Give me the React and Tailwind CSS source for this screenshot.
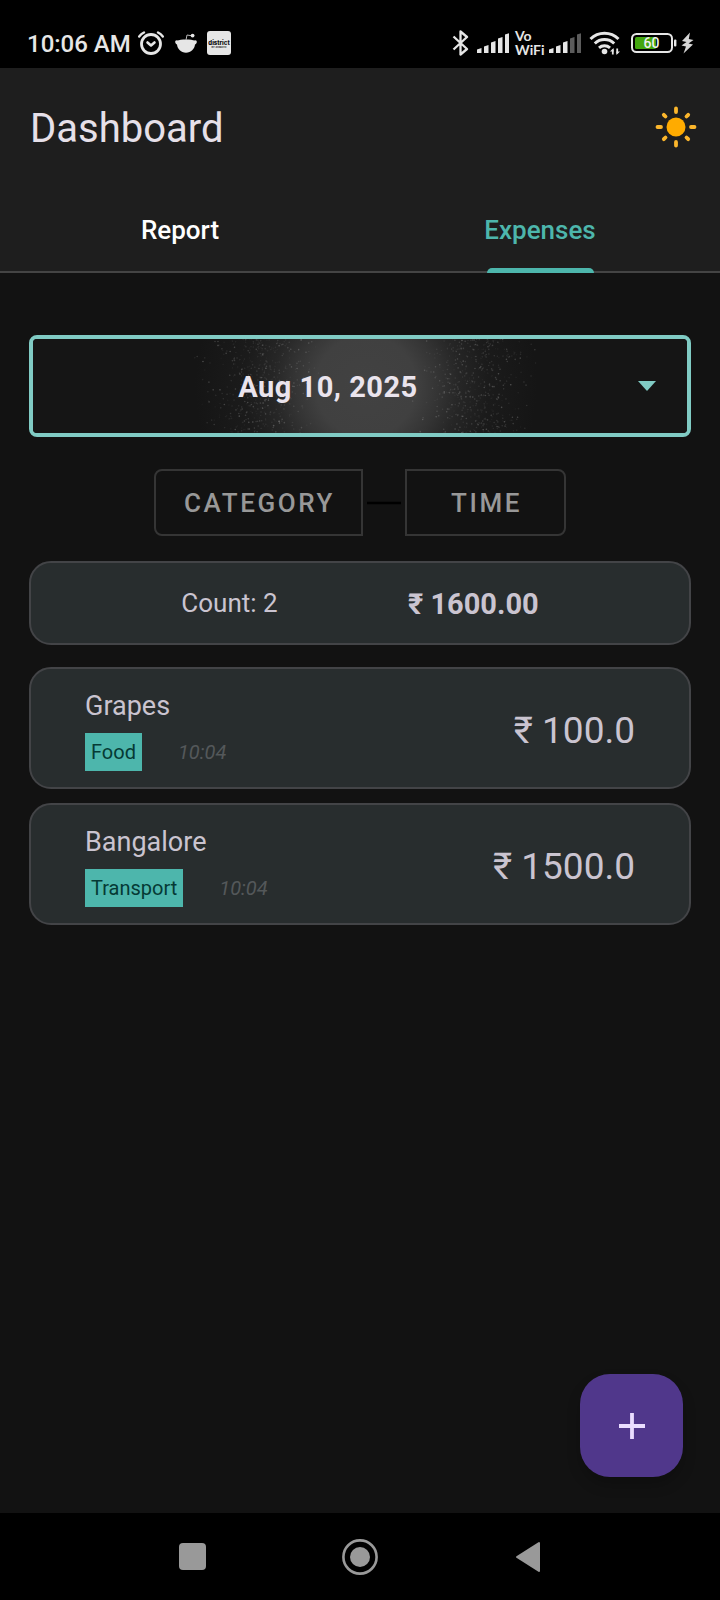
import React from "react";

const expenses = [
  { title: "Grapes", category: "Food", time: "10:04", amount: "₹ 100.0" },
  { title: "Bangalore", category: "Transport", time: "10:04", amount: "₹ 1500.0" },
];

function makeGrain() {
  let seed = 7;
  const rand = () => {
    seed = (seed * 16807) % 2147483647;
    return seed / 2147483647;
  };
  const dots = [];
  for (let i = 0; i < 1000; i++) {
    const side = rand() < 0.5 ? -1 : 1;
    const spread = 35 + ((rand() + rand() + rand()) / 3) * 145;
    dots.push({
      x: 333 + side * spread,
      y: rand() * 94,
      o: 0.03 + rand() * rand() * 0.24,
    });
  }
  return dots;
}

const grain = makeGrain();

function Glow() {
  return (
    <svg
      aria-hidden="true"
      className="absolute inset-0 h-full w-full"
      viewBox="0 0 654 94"
      preserveAspectRatio="xMidYMid slice"
    >
      <defs>
        <radialGradient id="glow" gradientUnits="userSpaceOnUse" cx="333" cy="47" r="180">
          <stop offset="0" stopColor="#424242" />
          <stop offset="0.28" stopColor="#404040" />
          <stop offset="0.4" stopColor="#343434" />
          <stop offset="0.52" stopColor="#262626" />
          <stop offset="0.68" stopColor="#1b1b1b" />
          <stop offset="0.95" stopColor="#151515" />
        </radialGradient>
      </defs>
      <rect width="654" height="94" fill="url(#glow)" />
      {grain.map((d, i) => (
        <circle key={i} cx={d.x} cy={d.y} r="0.8" fill="#fff" opacity={d.o} />
      ))}
    </svg>
  );
}

function Signal({ level }) {
  const bars = [5, 8, 12, 16, 20];
  return (
    <svg aria-hidden="true" width="32" height="20" viewBox="0 0 32 20">
      {bars.map((h, i) => (
        <path
          key={h}
          d={`M${i * 7} ${20 - h + 1.5}L${i * 7 + 4.5} ${20 - h}V20H${i * 7}Z`}
          fill={i < level ? "#e6e6e6" : "#5c5c5c"}
        />
      ))}
    </svg>
  );
}

function StatusBar() {
  return (
    <div className="flex h-[68px] items-center justify-between bg-black pr-[26px] pl-[27px] pt-[18px] text-[#e6e6e6]">
      <div className="flex items-center">
        <span className="pt-0.5 text-2xl leading-7 font-medium">10:06 AM</span>
        <svg aria-hidden="true" className="ml-1.5" width="28" height="24" viewBox="0 0 28 24" fill="none" stroke="#e6e6e6" strokeLinecap="round">
          <circle cx="14" cy="13" r="9.5" strokeWidth="2.8" />
          <path d="M2.200 5.500A14 14 0 0 1 7 1.500M25.800 5.500A14 14 0 0 0 21 1.500" strokeWidth="2.400" />
          <path d="M10.500 11.500L14 14.500L17.500 11.500" strokeWidth="2.600" strokeLinejoin="round" />
        </svg>
        <svg aria-hidden="true" className="ml-2.5" width="22" height="20" viewBox="0 0 22 20">
          <path d="M2.500 7.500C5 6 17 6 19.500 7.500C21 7 22 8 21.800 9.200C21.600 10.500 20.600 11 20 11.500C19.500 16 16 19.700 11 19.700S2.500 16 2 11.500C1.400 11 0.400 10.500 0.200 9.200C0 8 1 7 2.500 7.500Z" fill="#e6e6e6" />
          <path d="M11 7L12 2L17 2.800" fill="none" stroke="#b8b8b8" strokeWidth="1" />
          <circle cx="17.600" cy="2.600" r="1.900" fill="#e6e6e6" />
        </svg>
        <svg aria-hidden="true" className="ml-2.5" width="24" height="24" viewBox="0 0 24 24">
          <rect width="24" height="24" rx="3" fill="#e6e6e6" />
          <text x="12" y="13.500" textAnchor="middle" fontFamily="Inter, sans-serif" fontWeight="800" fontSize="6" fill="#111">district</text>
          <text x="12" y="17.200" textAnchor="middle" fontFamily="Inter, sans-serif" fontWeight="700" fontSize="2.500" fill="#222">BY ZOMATO</text>
        </svg>
      </div>
      <div className="flex items-center">
        <svg aria-hidden="true" width="17" height="26" viewBox="0 0 17 26" fill="none" stroke="#e6e6e6" strokeWidth="2.300" strokeLinejoin="round">
          <path d="M1.500 6.500L15 19L8.500 24.500V1.500L15 7L1.500 19.500" />
        </svg>
        <div className="ml-2">
          <Signal level={5} />
        </div>
        <svg aria-hidden="true" className="ml-1.5 overflow-visible" width="28" height="26" viewBox="0 0 28 26" fill="#e6e6e6" fontFamily="Lato, sans-serif" fontWeight="700" fontSize="14">
          <text x="0" y="11">Vo</text>
          <text x="0" y="25">WiFi</text>
        </svg>
        <div className="ml-1.5">
          <Signal level={3} />
        </div>
        <svg aria-hidden="true" className="ml-2" width="32" height="24" viewBox="0 0 32 24" fill="none" stroke="#e6e6e6" strokeWidth="3">
          <path d="M1.500 8A20 20 0 0 1 29.500 8" />
          <path d="M5.800 12.500A14 14 0 0 1 25.200 12.500" />
          <path d="M10 16.800A8.500 8.500 0 0 1 21 16.800" />
          <circle cx="15.500" cy="20.500" r="2.800" fill="#e6e6e6" stroke="none" />
          <path d="M23.800 23.500V18.500M28.200 17.500V22.500" strokeWidth="1.800" />
          <path d="M21 20.500L24.600 17V20.500ZM31 20.500L27.400 24V20.500Z" fill="#e6e6e6" stroke="none" />
        </svg>
        <svg aria-hidden="true" className="ml-2.5" width="46" height="20" viewBox="0 0 46 20">
          <rect x="1" y="1" width="40" height="18" rx="4.500" fill="none" stroke="#e6e6e6" strokeWidth="2" />
          <rect x="4" y="4" width="21" height="12" rx="1.500" fill="#43a60f" />
          <rect x="43" y="6.500" width="2.400" height="7" rx="1" fill="#e6e6e6" />
          <text x="20.500" y="15.200" textAnchor="middle" fontFamily="Roboto, sans-serif" fontWeight="500" fontSize="14" fill="#f0f0f0">60</text>
        </svg>
        <svg aria-hidden="true" className="ml-1" width="13" height="22" viewBox="0 0 13 22">
          <path d="M9 0.500L1 9L5.500 10L0.500 13.500L5 14.500L2.500 21.500L12 12.500L7.500 11.500L12.500 8L7.800 7Z" fill="#d6d6d6" />
        </svg>
      </div>
    </div>
  );
}

function SunIcon() {
  return (
    <svg aria-hidden="true" width="42" height="42" viewBox="0 0 42 42" stroke="#fbb62c" strokeWidth="3.800" strokeLinecap="round">
      <circle cx="21" cy="21" r="9.500" fill="#ffab00" stroke="none" />
      <path d="M21 2.500V6M21 36V39.500M2.500 21H6M36 21H39.500M8.800 8.800L10.500 10.500M31.500 31.500L33.200 33.200M8.800 33.200L10.500 31.500M31.500 10.500L33.200 8.800" />
    </svg>
  );
}

function Header() {
  return (
    <header className="border-b-2 border-[#444444] bg-[#1e1e1e]">
      <div className="flex h-[118px] items-center justify-between pr-[23px] pl-[30px]">
        <h1 className="pt-1 text-[40px] leading-[48px] text-[#e6e0e9]">Dashboard</h1>
        <button type="button" aria-label="Switch to light theme">
          <SunIcon />
        </button>
      </div>
      <nav className="grid h-[85px] grid-cols-2 text-[26px] leading-8 font-medium" aria-label="Sections">
        <button type="button" className="flex items-center justify-center pt-0.5 text-white">
          Report
        </button>
        <button type="button" aria-current="page" className="relative flex items-center justify-center pt-0.5 text-[#4db6ac]">
          Expenses
          <span className="absolute -bottom-0.5 h-[5px] w-[107px] rounded-t-[5px] bg-[#4db6ac]" />
        </button>
      </nav>
    </header>
  );
}

function DateSelect() {
  return (
    <div className="relative h-[102px] overflow-hidden rounded-lg border-4 border-[#80cbc4] bg-[#151515]">
      <Glow />
      <select
        aria-label="Date"
        defaultValue="2025-08-10"
        className="relative h-full w-full appearance-none bg-transparent pt-1 pr-[64px] text-center text-[29px] font-bold tracking-[0.5px] text-[#eae4ed] outline-none"
      >
        <option value="2025-08-10">Aug 10, 2025</option>
      </select>
      <svg aria-hidden="true" className="pointer-events-none absolute top-[42px] right-[31px]" width="18" height="10" viewBox="0 0 18 10">
        <path d="M0 0H18L9 10Z" fill="#80cbc4" />
      </svg>
    </div>
  );
}

function SortButtons() {
  const base =
    "h-[67px] border-2 border-[#353535] pl-0.5 text-[26px] leading-8 font-medium tracking-widest text-[#989898]";
  return (
    <div className="mt-8 flex items-center justify-center">
      <button type="button" className={`${base} w-[209px] rounded-l-lg`}>
        CATEGORY
      </button>
      <svg aria-hidden="true" className="mx-0.5" width="38" height="4" viewBox="0 0 38 4">
        <path d="M2 2H36" stroke="#000" strokeWidth="2.500" />
      </svg>
      <button type="button" className={`${base} w-[161px] rounded-r-lg`}>
        TIME
      </button>
    </div>
  );
}

function ExpenseCard({ title, category, time, amount }) {
  return (
    <li className="flex items-center justify-between rounded-[22px] border-2 border-[#434447] bg-[#282d2e] px-[54px] pt-[21px] pb-4">
      <div>
        <h2 className="text-[27px] leading-8 text-[#cac4d0]">{title}</h2>
        <div className="mt-[11px] flex items-center gap-9">
          <span className="bg-[#4db6ac] px-1.5 py-[5px] text-xl leading-7 text-[#053a35]">{category}</span>
          <time className="text-xl leading-7 text-[#54585a] italic">{time}</time>
        </div>
      </div>
      <p className="text-[37px] leading-[44px] text-[#cac4d0]">{amount}</p>
    </li>
  );
}

export default function App() {
  return (
    <div className="flex min-h-screen flex-col bg-[#121212] font-['Roboto','Noto_Sans',sans-serif]">
      <StatusBar />
      <Header />
      <main className="flex flex-1 flex-col px-[29px] pt-[62px]">
        <DateSelect />
        <SortButtons />
        <section
          aria-label="Summary"
          className="mt-[25px] grid h-[84px] grid-cols-2 items-center rounded-[22px] border-2 border-[#434447] bg-[#282d2e] text-[#cac4d0]"
        >
          <p className="pl-[68px] text-center text-[26px] leading-8">Count: 2</p>
          <p className="pt-0.5 pl-12 text-[29px] leading-8 font-bold">₹ 1600.00</p>
        </section>
        <ul className="mt-[22px] flex flex-col gap-3.5">
          {expenses.map((e) => (
            <ExpenseCard key={e.title} {...e} />
          ))}
        </ul>
        <button
          type="button"
          aria-label="Add expense"
          className="mt-auto mr-2 mb-9 flex size-[103px] items-center justify-center self-end rounded-[30px] bg-[#50378b] shadow-[0_8px_14px_rgba(0,0,0,0.2)]"
        >
          <svg aria-hidden="true" width="26" height="26" viewBox="0 0 26 26" stroke="#eaddff" strokeWidth="3.800">
            <path d="M13 0V26M0 13H26" />
          </svg>
        </button>
      </main>
      <nav className="flex h-[87px] items-center justify-center gap-[132px] bg-black" aria-label="System">
        <button type="button" aria-label="Recent apps" className="flex w-9 justify-center">
          <svg aria-hidden="true" width="27" height="27" viewBox="0 0 27 27">
            <rect width="27" height="27" rx="4" fill="#999" />
          </svg>
        </button>
        <button type="button" aria-label="Home">
          <svg aria-hidden="true" width="36" height="36" viewBox="0 0 36 36">
            <circle cx="18" cy="18" r="16.600" fill="none" stroke="#999" strokeWidth="2.600" />
            <circle cx="18" cy="18" r="10" fill="#999" />
          </svg>
        </button>
        <button type="button" aria-label="Back" className="flex w-9 justify-center">
          <svg aria-hidden="true" width="26" height="32" viewBox="0 0 26 32">
            <path d="M2 16L24 2V30Z" fill="#999" stroke="#999" strokeWidth="2" strokeLinejoin="round" />
          </svg>
        </button>
      </nav>
    </div>
  );
}
